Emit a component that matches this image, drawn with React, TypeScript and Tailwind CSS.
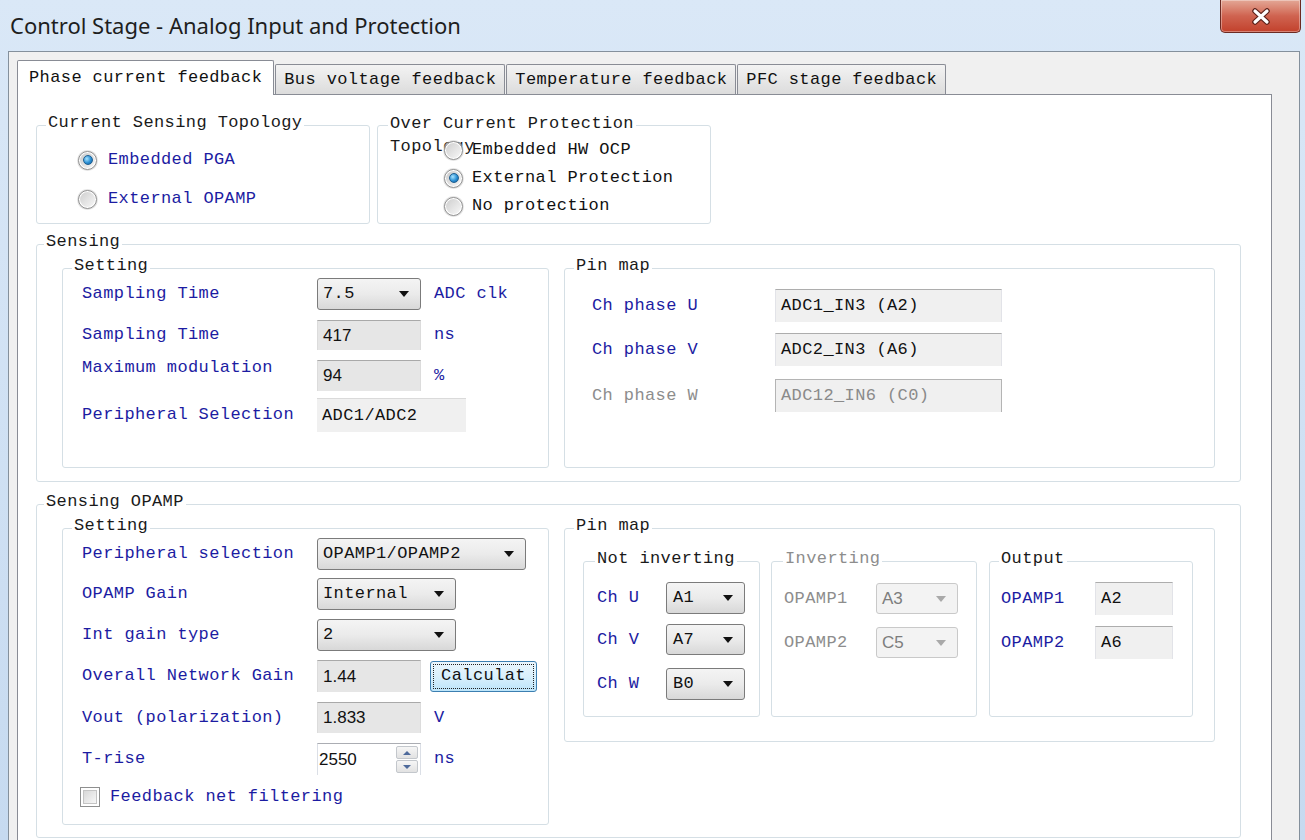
import type { ReactNode } from "react";
import clsx from "clsx";
import { twMerge } from "tailwind-merge";

const cx = (...args: Parameters<typeof clsx>) => twMerge(clsx(args));

const blue = "text-[#1c1ca2]";
const grey = "text-[#8d8d8d]";

function GroupBox({
    title,
    className,
    legendClassName,
    disabled,
    children,
}: {
    title: string;
    className?: string;
    legendClassName?: string;
    disabled?: boolean;
    children?: ReactNode;
}) {
    return (
        <div className={cx("relative shrink-0 rounded-[3px] border border-[#d5dfe5]", className)}>
            <span
                className={cx(
                    "absolute -top-[13px] left-[9px] whitespace-pre-line bg-white px-[2px] leading-[20px]",
                    disabled ? grey : "text-[#1a1a1a]",
                    legendClassName
                )}
            >
                {title}
            </span>
            {children}
        </div>
    );
}

function Radio({ checked }: { checked?: boolean }) {
    return (
        <span className="flex h-[19px] w-[19px] shrink-0 items-center justify-center rounded-full border border-[#919191] bg-white shadow-[0_0_0_1px_rgba(200,200,200,0.5)]">
            {checked ? (
                <span className="flex h-[15px] w-[15px] items-center justify-center rounded-full bg-linear-to-br from-[#c9c9c9] to-[#f6f6f6]">
                    <span className="h-[10px] w-[10px] rounded-full border border-[#1f5f91] bg-[radial-gradient(circle_at_35%_35%,#a8e4ff,#2a8fd4_55%,#0d5a98)]" />
                </span>
            ) : (
                <span className="h-[15px] w-[15px] rounded-full bg-linear-to-br from-[#cfcfcf] to-[#f7f7f7]" />
            )}
        </span>
    );
}

function RadioRow({
    label,
    checked,
    className,
}: {
    label: string;
    checked?: boolean;
    className?: string;
}) {
    return (
        <div className={cx("relative flex h-[30px] items-center gap-[11px]", className)}>
            <Radio checked={checked} />
            <span>{label}</span>
        </div>
    );
}

function Arrow({ disabled }: { disabled?: boolean }) {
    return (
        <svg width="10" height="6" viewBox="0 0 10 6" className="shrink-0">
            <path d="M0 0h10L5 6z" fill={disabled ? "#a9a9a9" : "#111"} />
        </svg>
    );
}

function Combo({
    value,
    className,
    disabled,
    sans,
}: {
    value: string;
    className?: string;
    disabled?: boolean;
    sans?: boolean;
}) {
    return (
        <div
            className={cx(
                "flex h-full shrink-0 items-center justify-between rounded-[3px] border pl-[5px] pr-[11px]",
                disabled
                    ? "border-[#c9c9c9] bg-[#f3f3f3] text-[#7d7d7d]"
                    : "border-[#7b7b7b] bg-linear-to-b from-[#f4f4f4] via-[#ebebeb] to-[#d8d8d8] text-[#111]",
                className
            )}
        >
            <span className={clsx(sans && "font-['Liberation_Sans',sans-serif] tracking-normal")}>{value}</span>
            <Arrow disabled={disabled} />
        </div>
    );
}

function Field({
    value,
    className,
    variant = "dim",
    sans,
}: {
    value: string;
    className?: string;
    variant?: "dim" | "flat" | "light" | "disabled";
    sans?: boolean;
}) {
    return (
        <div
            className={cx(
                "flex h-full shrink-0 items-center pl-[5px]",
                variant === "dim" && "border-x border-t border-x-[#dcdcdc] border-t-[#a9a9a9] bg-[#e6e6e6] text-[#111]",
                variant === "light" && "border-x border-t border-x-[#e2e3e8] border-t-[#adadad] bg-[#f0f0f0] text-[#111]",
                variant === "flat" && "border-t border-[#dadada] bg-[#f0f0f0] text-[#111]",
                variant === "disabled" && "border border-[#b4b4b4] border-b-0 bg-[#f0f0f0] text-[#8a8a8a]",
                sans && "font-['Liberation_Sans',sans-serif] tracking-normal",
                className
            )}
        >
            {value}
        </div>
    );
}

function Row({
    label,
    labelWidth,
    className,
    labelClassName,
    children,
}: {
    label: string;
    labelWidth: string;
    className?: string;
    labelClassName?: string;
    children?: ReactNode;
}) {
    return (
        <div className={cx("flex items-center", className)}>
            <span className={cx("shrink-0", blue, labelWidth, labelClassName)}>{label}</span>
            {children}
        </div>
    );
}

function Spin({ value }: { value: string }) {
    return (
        <div className="flex h-full w-[104px] shrink-0 border-x border-t border-x-[#dbdfe6] border-t-[#abadb3] bg-white">
            <span className="flex flex-1 items-center pl-[1px] font-['Liberation_Sans',sans-serif] tracking-normal text-[#111]">
                {value}
            </span>
            <div className="my-[2px] mr-[2px] flex w-[22px] flex-col gap-px">
                <div className="flex flex-1 items-center justify-center rounded-[2px] border border-[#c3c7cc] bg-linear-to-b from-[#f6f6f6] to-[#e2e2e2]">
                    <svg width="8" height="4" viewBox="0 0 8 4">
                        <path d="M0 4L4 0l4 4z" fill="#4e6a9b" />
                    </svg>
                </div>
                <div className="flex flex-1 items-center justify-center rounded-[2px] border border-[#c3c7cc] bg-linear-to-b from-[#f6f6f6] to-[#e2e2e2]">
                    <svg width="8" height="4" viewBox="0 0 8 4">
                        <path d="M0 0h8L4 4z" fill="#4e6a9b" />
                    </svg>
                </div>
            </div>
        </div>
    );
}

function CloseButton() {
    return (
        <div className="mr-[4px] flex h-[33px] w-[81px] items-center justify-center rounded-b-[5px] border border-t-0 border-[#6b2a22] bg-linear-to-b from-[#e3a796] via-[#cf6350] to-[#c2402b] shadow-[inset_0_0_0_1px_rgba(255,255,255,0.35)]">
            <svg width="20" height="17" viewBox="0 0 20 17">
                <path d="M4 3l12 11M16 3L4 14" stroke="#5a1f18" strokeWidth="5.5" strokeLinecap="round" />
                <path d="M4 3l12 11M16 3L4 14" stroke="#fff" strokeWidth="3.2" strokeLinecap="round" />
            </svg>
        </div>
    );
}

const tabs = ["Bus voltage feedback", "Temperature feedback", "PFC stage feedback"];

export default function App() {
    return (
        <div className="flex h-[840px] w-[1305px] flex-col overflow-hidden bg-linear-to-b from-[#dae8f7] to-[#c6daf0] font-['Liberation_Mono',monospace] text-[17px] leading-[20px] tracking-[0.4px] text-[#111]">
            {/* title bar */}
            <div className="flex h-[51px] shrink-0 items-start justify-between">
                <span className="ml-[10px] mt-[10px] font-['Noto_Sans',sans-serif] text-[22px] leading-[30px] tracking-normal text-[#1e1e1e]">
                    Control Stage - Analog Input and Protection
                </span>
                <CloseButton />
            </div>

            {/* client area */}
            <div className="ml-[8px] mr-[5px] flex flex-1 flex-col border border-b-0 border-[#84909c] bg-[#f0f0f0]">
                <div className="ml-[8px] mt-[8px] flex items-end">
                    <div className="relative z-10 -mb-px flex h-[35px] items-center rounded-t-[2px] border border-b-0 border-[#898c95] bg-white px-[11px]">
                        Phase current feedback
                    </div>
                    {tabs.map((t) => (
                        <div
                            key={t}
                            className="ml-px flex h-[30px] items-center rounded-t-[2px] border border-b-0 border-[#898c95] bg-linear-to-b from-[#f3f3f3] to-[#dcdcdc] px-[8px]"
                        >
                            {t}
                        </div>
                    ))}
                </div>

                {/* tab page */}
                <div className="ml-[8px] mr-[27px] flex flex-1 flex-col border border-b-0 border-[#898c95] bg-white pl-[18px] pt-[30px]">
                    <div className="flex gap-[7px]">
                        <GroupBox title="Current Sensing Topology" className="h-[99px] w-[334px]">
                            <div className={clsx("flex flex-col gap-[9px] pl-[41px] pt-[19px]", blue)}>
                                <RadioRow label="Embedded PGA" checked />
                                <RadioRow label="External OPAMP" />
                            </div>
                        </GroupBox>
                        <GroupBox
                            title={"Over Current Protection\nTopology"}
                            className="h-[99px] w-[334px]"
                            legendClassName="left-[10px] -top-[14px] leading-[23px]"
                        >
                            <div className="flex flex-col pl-[66px] pt-[10px]">
                                <RadioRow label="Embedded HW OCP" className="h-[28px] gap-[9px]" />
                                <RadioRow label="External Protection" checked className="h-[28px] gap-[9px]" />
                                <RadioRow label="No protection" className="h-[28px] gap-[9px]" />
                            </div>
                        </GroupBox>
                    </div>

                    {/* Sensing */}
                    <GroupBox title="Sensing" className="mt-[20px] h-[238px] w-[1205px]" legendClassName="left-[7px]">
                        <div className="flex gap-[15px] pl-[25px] pt-[23px]">
                            <GroupBox title="Setting" className="h-[200px] w-[487px]">
                                <div className="flex flex-col pl-[19px] pt-[9px]">
                                    <Row label="Sampling Time" labelWidth="w-[235px]" className="h-[32px]">
                                        <Combo value="7.5" className="w-[104px]" />
                                        <span className={clsx("ml-[13px]", blue)}>ADC clk</span>
                                    </Row>
                                    <Row label="Sampling Time" labelWidth="w-[235px]" className="mt-[10px] h-[30px]">
                                        <Field value="417" sans className="w-[104px]" />
                                        <span className={clsx("ml-[13px]", blue)}>ns</span>
                                    </Row>
                                    <Row
                                        label="Maximum modulation"
                                        labelWidth="w-[235px]"
                                        labelClassName="mb-4"
                                        className="mt-[10px] h-[31px]"
                                    >
                                        <Field value="94" sans className="w-[104px]" />
                                        <span className={clsx("ml-[13px]", blue)}>%</span>
                                    </Row>
                                    <Row label="Peripheral Selection" labelWidth="w-[235px]" className="mt-[7px] h-[34px]">
                                        <Field value="ADC1/ADC2" variant="flat" className="w-[149px]" />
                                    </Row>
                                </div>
                            </GroupBox>
                            <GroupBox title="Pin map" className="h-[200px] w-[651px]">
                                <div className="flex flex-col pl-[27px] pt-[20px]">
                                    <Row label="Ch phase U" labelWidth="w-[183px]" className="h-[33px]">
                                        <Field value="ADC1_IN3 (A2)" variant="light" className="w-[227px]" />
                                    </Row>
                                    <Row label="Ch phase V" labelWidth="w-[183px]" className="mt-[11px] h-[33px]">
                                        <Field value="ADC2_IN3 (A6)" variant="light" className="w-[227px]" />
                                    </Row>
                                    <Row
                                        label="Ch phase W"
                                        labelWidth="w-[183px]"
                                        labelClassName={grey}
                                        className="mt-[13px] h-[33px]"
                                    >
                                        <Field value="ADC12_IN6 (C0)" variant="disabled" className="w-[227px]" />
                                    </Row>
                                </div>
                            </GroupBox>
                        </div>
                    </GroupBox>

                    {/* Sensing OPAMP */}
                    <GroupBox title="Sensing OPAMP" className="mt-[22px] h-[334px] w-[1205px]" legendClassName="left-[7px]">
                        <div className="flex items-start gap-[15px] pl-[25px] pt-[23px]">
                            <GroupBox title="Setting" className="h-[297px] w-[487px]">
                                <div className="flex flex-col pl-[19px] pt-[9px]">
                                    <Row label="Peripheral selection" labelWidth="w-[235px]" className="h-[32px]">
                                        <Combo value="OPAMP1/OPAMP2" className="w-[209px]" />
                                    </Row>
                                    <Row label="OPAMP Gain" labelWidth="w-[235px]" className="mt-[8px] h-[32px]">
                                        <Combo value="Internal" className="w-[139px]" />
                                    </Row>
                                    <Row label="Int gain type" labelWidth="w-[235px]" className="mt-[9px] h-[32px]">
                                        <Combo value="2" className="w-[139px]" />
                                    </Row>
                                    <Row label="Overall Network Gain" labelWidth="w-[235px]" className="mt-[9px] h-[32px]">
                                        <Field value="1.44" sans className="w-[104px]" />
                                        <button className="ml-[9px] flex h-[31px] w-[107px] items-center justify-center rounded-[3px] border border-[#3c7fb1] bg-linear-to-b from-[#eaf6fd] via-[#d9f0fc] to-[#bde5fa] p-[2px] tracking-[0.4px] text-[#111]">
                                            <span className="flex h-full w-full items-center justify-center border border-dotted border-[#222]">
                                                Calculat
                                            </span>
                                        </button>
                                    </Row>
                                    <Row label="Vout (polarization)" labelWidth="w-[235px]" className="mt-[10px] h-[31px]">
                                        <Field value="1.833" sans className="w-[104px]" />
                                        <span className={clsx("ml-[13px]", blue)}>V</span>
                                    </Row>
                                    <Row label="T-rise" labelWidth="w-[235px]" className="mt-[10px] h-[32px]">
                                        <Spin value="2550" />
                                        <span className={clsx("ml-[13px]", blue)}>ns</span>
                                    </Row>
                                    <div className="-ml-[2px] mt-[12px] flex h-[20px] items-center gap-[10px]">
                                        <span className="flex h-[20px] w-[20px] items-center justify-center border border-[#8e8f8f] bg-white">
                                            <span className="h-[14px] w-[14px] border border-[#c4c4c4] bg-linear-to-br from-[#d8d8d8] to-[#f7f7f7]" />
                                        </span>
                                        <span className={blue}>Feedback net filtering</span>
                                    </div>
                                </div>
                            </GroupBox>

                            <GroupBox title="Pin map" className="h-[214px] w-[651px]">
                                <div className="flex pl-[18px] pt-[32px]">
                                    <GroupBox title="Not inverting" className="h-[156px] w-[177px]" legendClassName="left-[11px]">
                                        <div className="flex flex-col pl-[13px] pt-[20px]">
                                            <Row label="Ch U" labelWidth="w-[69px]" className="h-[32px]">
                                                <Combo value="A1" className="w-[79px] pl-[6px]" />
                                            </Row>
                                            <Row label="Ch V" labelWidth="w-[69px]" className="mt-[10px] h-[31px]">
                                                <Combo value="A7" className="w-[79px] pl-[6px]" />
                                            </Row>
                                            <Row label="Ch W" labelWidth="w-[69px]" className="mt-[13px] h-[32px]">
                                                <Combo value="B0" className="w-[79px] pl-[6px]" />
                                            </Row>
                                        </div>
                                    </GroupBox>
                                    <GroupBox
                                        title="Inverting"
                                        disabled
                                        className="ml-[11px] h-[156px] w-[206px]"
                                        legendClassName="left-[11px]"
                                    >
                                        <div className="flex flex-col pl-[12px] pt-[21px]">
                                            <Row label="OPAMP1" labelWidth="w-[92px]" labelClassName={grey} className="h-[31px]">
                                                <Combo value="A3" sans disabled className="w-[82px]" />
                                            </Row>
                                            <Row label="OPAMP2" labelWidth="w-[92px]" labelClassName={grey} className="mt-[13px] h-[31px]">
                                                <Combo value="C5" sans disabled className="w-[82px]" />
                                            </Row>
                                        </div>
                                    </GroupBox>
                                    <GroupBox title="Output" className="ml-[12px] h-[156px] w-[204px]">
                                        <div className="flex flex-col pl-[11px] pt-[20px]">
                                            <Row label="OPAMP1" labelWidth="w-[94px]" className="h-[33px]">
                                                <Field value="A2" variant="light" className="w-[78px]" />
                                            </Row>
                                            <Row label="OPAMP2" labelWidth="w-[94px]" className="mt-[11px] h-[33px]">
                                                <Field value="A6" variant="light" className="w-[78px]" />
                                            </Row>
                                        </div>
                                    </GroupBox>
                                </div>
                            </GroupBox>
                        </div>
                    </GroupBox>
                </div>
            </div>
        </div>
    );
}
